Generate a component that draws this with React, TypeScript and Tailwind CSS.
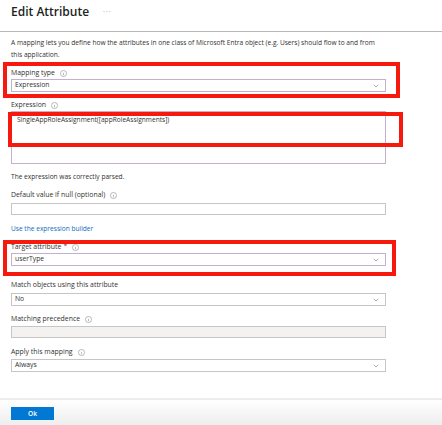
import { ChevronDown } from "lucide-react"

const Info = () => (
  <svg width="7" height="7" viewBox="0 0 16 16" className="ml-[5px] inline-block text-[#8a8886]">
    <circle cx="8" cy="8" r="7" fill="none" stroke="currentColor" strokeWidth="1.3" />
    <path d="M8 7v5M8 4.5v.5" stroke="currentColor" strokeWidth="1.4" />
  </svg>
)

const Label = ({ text, info, req, className = "" }: { text: string; info?: boolean; req?: boolean; className?: string }) => (
  <div className={`flex h-[12px] items-center text-[6.9px] text-[#323130] ${className}`}>
    {text}
    {req && <span className="ml-[2px] text-[#a4262c]">*</span>}
    {info && <Info />}
  </div>
)

const Select = ({ value, className = "", purple }: { value: string; className?: string; purple?: boolean }) => (
  <div
    className={`flex h-[13px] w-[375px] items-center justify-between border pl-[3px] pr-[5px] text-[6.8px] text-[#323130] ${
      purple ? "border-[#c2b0cf]" : "border-[#c8c6c4]"
    } ${className}`}
  >
    <span>{value}</span>
    <ChevronDown size={8} strokeWidth={1.5} className="text-[#605e5c]" />
  </div>
)

export default function App() {
  return (
    <div className="relative h-[425px] w-[442px] overflow-hidden bg-white font-['Open_Sans',sans-serif]">
      {/* header */}
      <div className="flex h-[32px] items-start border-b border-[#b8b8b8] px-[11px] pt-[3px]">
        <h1 className="text-[12px] font-semibold leading-[18px] text-[#201f1e]">Edit Attribute</h1>
        <span className="ml-[14px] text-[7px] leading-[18px] tracking-[1px] text-[#8a8886]">···</span>
      </div>

      <div className="px-[11px]">
        <p className="mt-[5px] w-[370px] text-[6.6px] leading-[12px] text-[#323130]">
          A mapping lets you define how the attributes in one class of Microsoft Entra object (e.g. Users) should flow to and from this application.
        </p>

        <Label text="Mapping type" info className="mt-[6px]" />
        <Select value="Expression" purple />

        <Label text="Expression" info className="mt-[7px]" />
        <div className="h-[53px] w-[375px] border border-[#c2b0cf] px-[5px] pt-[2px] text-[6.6px] leading-[12px] text-[#323130]">
          SingleAppRoleAssignment([appRoleAssignments])
        </div>

        <div className="mt-[7px] flex h-[12px] items-center text-[6.6px] text-[#323130]">The expression was correctly parsed.</div>

        <Label text="Default value if null (optional)" info className="mt-[6px]" />
        <div className="mt-[2px] h-[12px] w-[375px] border border-[#c8c6c4]" />

        <div className="mt-[8px] flex h-[12px] items-center text-[6.6px] text-[#0f6cbd]">Use the expression builder</div>

        <Label text="Target attribute" req info className="mt-[6px]" />
        <Select value="userType" purple />

        <Label text="Match objects using this attribute" className="mt-[13px]" />
        <Select value="No" className="mt-[2px]" />

        <Label text="Matching precedence" info className="mt-[7px]" />
        <div className="mt-[1px] h-[12px] w-[375px] border border-[#c8c6c4] bg-[#f3f2f1]" />

        <Label text="Apply this mapping" info className="mt-[8px]" />
        <Select value="Always" className="mt-[1px]" />
      </div>

      {/* footer */}
      <div className="absolute bottom-0 left-0 right-0 h-[27px] border-t-2 border-[#ececec] bg-gradient-to-b from-white to-[#eeeeee] px-[11px] pt-[7px]">
        <button className="flex h-[13px] w-[43px] items-center justify-center bg-[#0078d4] text-[6.6px] font-semibold text-white">Ok</button>
      </div>

      {/* red annotation boxes */}
      <div className="absolute left-[3px] top-[62px] h-[36px] w-[397px] border-4 border-[#f5190e]" />
      <div className="absolute left-[8px] top-[112px] h-[35px] w-[395px] border-4 border-[#f5190e]" />
      <div className="absolute left-[3px] top-[240px] h-[36px] w-[393px] border-4 border-[#f5190e]" />
    </div>
  )
}
